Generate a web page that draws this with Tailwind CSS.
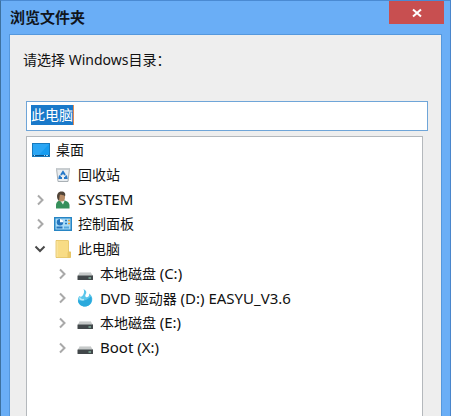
<!DOCTYPE html>
<html lang="zh-CN">
<head>
  <meta charset="UTF-8" />
  <title>浏览文件夹</title>
  <meta name="viewport" content="width=device-width, initial-scale=1" />
  <script src="https://cdn.jsdelivr.net/npm/@tailwindcss/browser@4"></script>
</head>
<body class="min-h-screen flex flex-col bg-[#6aaef6] border-l border-r border-t border-l-[#3d719f] border-r-[#4a86cc] border-t-[#4a8ad2] font-['Noto_Sans','Noto_Sans_CJK_SC',sans-serif] text-sm text-[#111]">

  <!-- shared icons -->
  <svg class="hidden">
    <symbol id="chevron" viewBox="0 0 12 12">
      <path d="M4 1.500 8.500 6l-4.500 4.500" fill="none" stroke="#a9a9a9" stroke-width="2" />
    </symbol>
    <symbol id="drive" viewBox="0 0 18 16">
      <path d="M4 6h10.500l2.500 4H1.500z" fill="#c6c9c9" />
      <path d="M4 6h10.500l.5 1H3.500z" fill="#dfe1e1" />
      <rect x="1.500" y="9.500" width="15.500" height="4.500" rx=".5" fill="#42474a" />
      <path d="M2 9.500h15" stroke="#858b8c" />
      <path d="M12.500 12H15" stroke="#8cc9ae" stroke-width="1.200" />
    </symbol>
  </svg>

  <header class="flex h-[33px] items-start justify-between pl-[9px] pr-[6px]">
    <h1 class="text-[15px] leading-8 font-bold text-[#10151c]">浏览文件夹</h1>
    <button type="button" aria-label="关闭" class="flex h-[23px] w-[55px] items-center justify-center bg-[#c84f50]">
      <svg class="h-[10px] w-[10px]" viewBox="0 0 10 10"><path d="M1 1.500l8 7M9 1.500l-8 7" stroke="#fff" stroke-width="2" /></svg>
    </button>
  </header>

  <main class="mx-2 flex flex-1 flex-col border-x border-t border-x-[#5598dd] border-t-[#5598dd] bg-[#eee] pl-4">
    <label for="folder" class="-ml-[3px] pt-[15px] text-sm leading-5">请选择 Windows目录：</label>
    <div class="mt-[31px] mr-[13px] flex h-[30px] border border-[#6fa5d8] bg-white px-1 py-[3px]">
      <input id="folder" type="text" value="此电脑" class="h-5 w-[43px] border-r border-[#e08a50] bg-[#1979ca] text-sm leading-5 text-white outline-none" />
    </div>

    <ul role="tree" aria-label="文件夹" class="mt-[5px] mr-[18px] flex-1 border-x border-t border-[#b4b8bc] bg-white pt-px">
      <li role="treeitem" aria-expanded="true" class="grid h-[222px] auto-rows-fr">
        <div class="flex items-center gap-[6px] pl-[5px]">
          <svg class="h-4 w-[18px]" viewBox="0 0 18 16">
            <rect x=".5" y="1.500" width="17" height="13" fill="#169cf0" stroke="#1679bd" />
            <path d="M1 2h16L7 13H1z" fill="#2ba6f4" />
            <path d="M1 13.500h16" stroke="#0b5288" />
            <path d="M2 13.500h1M12 13.500h1M14 13.500h2" stroke="#a8d8f5" />
          </svg>
          <span>桌面</span>
        </div>
        <div class="flex items-center gap-[6px] pl-[27px]">
          <svg class="h-4 w-[18px]" viewBox="0 0 18 16">
            <path d="M2.500 1.500h13l-1.500 13H4z" fill="#e9edf0" stroke="#a9b0b5" />
            <path d="M2.500 2h13" stroke="#c8cdd0" stroke-width="2" />
            <path d="M7 8 9 5l2 3M12 8.500l.5 2.500h-2.500M8 11H5.500L6 8.500" fill="none" stroke="#2678c8" stroke-width="2" />
          </svg>
          <span>回收站</span>
        </div>
        <div class="flex items-center pl-[7px]">
          <button type="button" aria-label="展开 SYSTEM" class="mr-2 h-3 w-3"><svg class="h-3 w-3"><use href="#chevron" /></svg></button>
          <svg class="mr-[6px] h-[18px] w-[18px]" viewBox="0 0 18 18">
            <path d="M2 17.500v-3C2 11 4 9.500 6.500 9.500h3c4 0 6 2.500 6 5v3z" fill="#36905b" />
            <path d="M6.500 10h4L9 13.500z" fill="#edf3ed" />
            <ellipse cx="7.500" cy="6" rx="3.500" ry="4.500" fill="#b98d68" />
            <path d="M3.500 8C2 3 4.500.5 7.500.5c3 0 4.500 2 3.500 5-1-2-3-1-5-2C5.500 4.500 5.500 7 5 10z" fill="#514438" />
          </svg>
          <span class="text-[15px]">SYSTEM</span>
        </div>
        <div class="flex items-center pl-[7px]">
          <button type="button" aria-label="展开 控制面板" class="mr-2 h-3 w-3"><svg class="h-3 w-3"><use href="#chevron" /></svg></button>
          <svg class="mr-[6px] h-4 w-[18px]" viewBox="0 0 18 16">
            <rect x=".75" y="1.750" width="16.500" height="12.500" fill="#a9dcf8" stroke="#2785c4" stroke-width="1.500" />
            <circle cx="6" cy="6.200" r="3.200" fill="#2474bd" />
            <path d="M6 6.200V3A3.200 3.200 0 0 1 9.200 6.200z" fill="#fff" />
            <path d="M11 4.500h2M11 7.500h2" stroke="#237cc2" stroke-width="1.500" />
            <path d="M14 4.500h2M14 7.500h2" stroke="#e8a23b" stroke-width="1.500" />
            <path d="M2.500 11.500h6" stroke="#2474bd" stroke-width="2" />
            <path d="M10 11.500h5" stroke="#57a9dc" stroke-width="2" />
          </svg>
          <span>控制面板</span>
        </div>
        <div class="flex items-center pl-[7px]">
          <button type="button" aria-label="折叠 此电脑" class="mr-2 h-3 w-3">
            <svg class="h-3 w-3" viewBox="0 0 12 12"><path d="M1.500 3.500 6 8l4.500-4.500" fill="none" stroke="#494949" stroke-width="2" /></svg>
          </button>
          <svg class="mr-[6px] h-[18px] w-[18px]" viewBox="0 0 18 18">
            <path d="M2 .5h12.500V12h2v5.500H2z" fill="#f8dc85" />
            <path d="M2 .5h1.500v17H2z" fill="#fbe8ab" />
            <path d="M13.500 12.500 16.500 11.500v6h-3z" fill="#eac869" />
            <path d="M14.500 1v11h2v5.500H2V.5h12.500" fill="none" stroke="#e3c05c" stroke-width=".8" />
          </svg>
          <span>此电脑</span>
        </div>
        <div class="flex items-center pl-[29px]">
          <button type="button" aria-label="展开 本地磁盘 (C:)" class="mr-2 h-3 w-3"><svg class="h-3 w-3"><use href="#chevron" /></svg></button>
          <svg class="mr-[6px] h-4 w-[18px]"><use href="#drive" /></svg>
          <span>本地磁盘 <span class="text-[15px]">(C:)</span></span>
        </div>
        <div class="flex items-center pl-[29px]">
          <button type="button" aria-label="展开 DVD 驱动器" class="mr-2 h-3 w-3"><svg class="h-3 w-3"><use href="#chevron" /></svg></button>
          <!-- disc drop with a curled tip -->
          <svg class="mr-[6px] h-[18px] w-[18px]" viewBox="0 0 18 18">
            <path d="M7.500 0c3 1.500 3.500 3.500 2.200 5.200C8.700 6.700 9.500 8.500 11 8.300c1.800-.2 2.500-2 2-3.800 2.500 1.500 3.800 4 3.200 7-.6 3.500-3.700 6-7.200 6S2.500 15 2 12c-.3-2 .2-3.800 1.500-5C4 8 5.500 8 6.500 6.700 8 4.700 8.700 2.500 7.500 0z" fill="#5cc6ea" />
            <path d="M2 11c4 1.500 9 .5 13-3.500 2.500 5-1.500 10-6 10-4 0-7-2.500-7-6.500z" fill="#2ba9dc" />
            <path d="M3.500 8.500c.5 1.500 2.500 2.500 4.500 2" fill="none" stroke="#b5e9f8" stroke-width="1.500" />
          </svg>
          <span class="text-[15px]">DVD <span class="text-sm">驱动器</span> (D:) EASYU_V3.6</span>
        </div>
        <div class="flex items-center pl-[29px]">
          <button type="button" aria-label="展开 本地磁盘 (E:)" class="mr-2 h-3 w-3"><svg class="h-3 w-3"><use href="#chevron" /></svg></button>
          <svg class="mr-[6px] h-4 w-[18px]"><use href="#drive" /></svg>
          <span>本地磁盘 <span class="text-[15px]">(E:)</span></span>
        </div>
        <div class="flex items-center pl-[29px]">
          <button type="button" aria-label="展开 Boot (X:)" class="mr-2 h-3 w-3"><svg class="h-3 w-3"><use href="#chevron" /></svg></button>
          <svg class="mr-[6px] h-4 w-[18px]"><use href="#drive" /></svg>
          <span class="text-[15px]">Boot (X:)</span>
        </div>
      </li>
    </ul>
  </main>
</body>
</html>
